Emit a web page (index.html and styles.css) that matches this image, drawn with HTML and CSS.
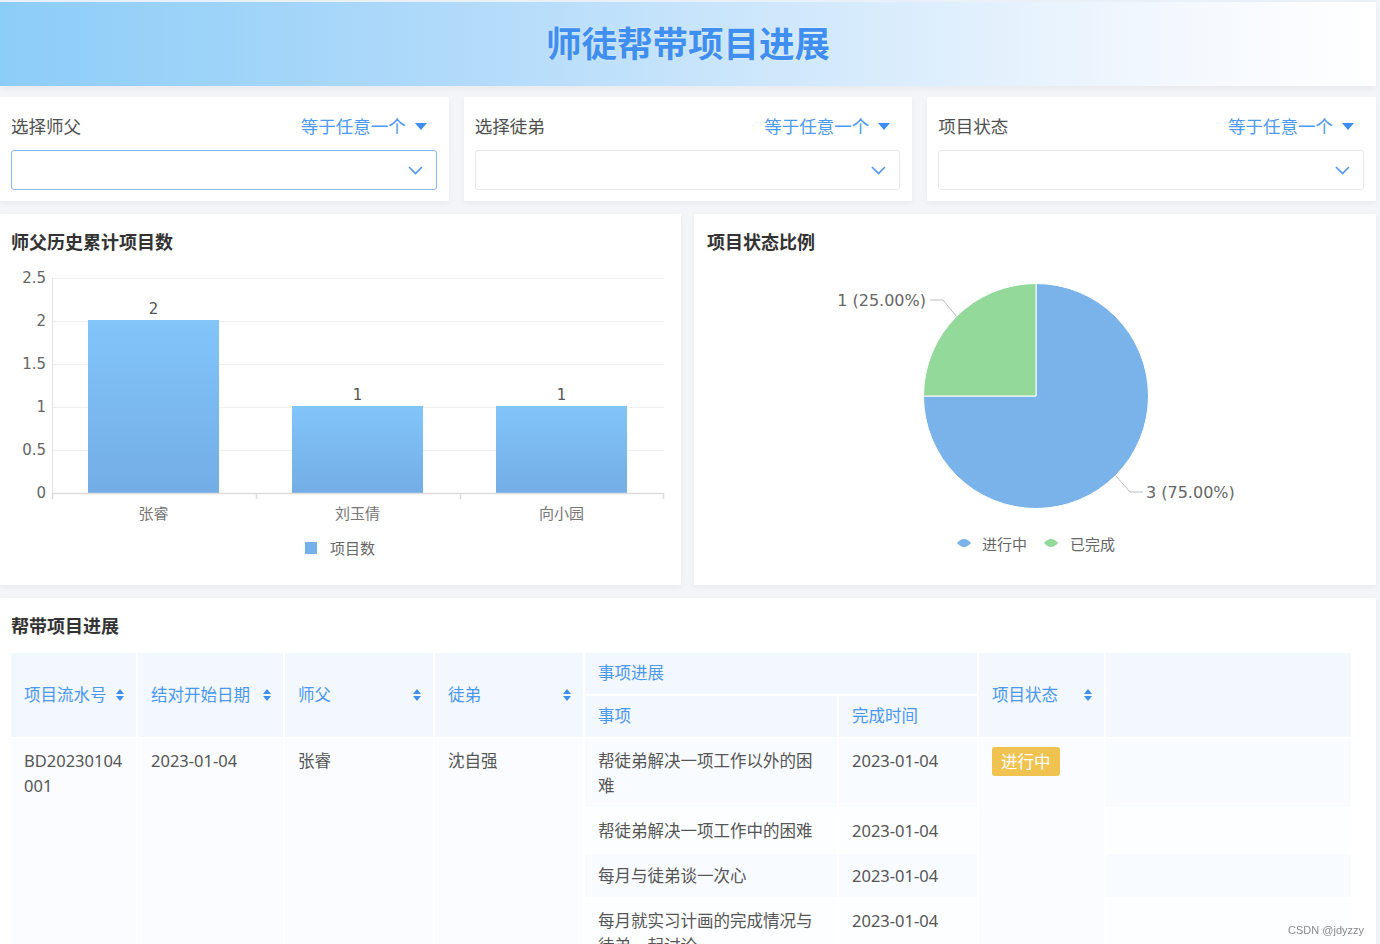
FILE: index.html
```html
<!DOCTYPE html>
<html lang="zh-CN">
<head>
<meta charset="utf-8">
<title>师徒帮带项目进展</title>
<link rel="stylesheet" href="styles.css">
</head>
<body>
<div class="page">
  <header class="banner"><h1>师徒帮带项目进展</h1></header>

  <section class="filters">
    <div class="card filter">
      <div class="filter-head">
        <span class="filter-label">选择师父</span>
        <span class="filter-op">等于任意一个<svg class="caret" width="12" height="7" viewBox="0 0 12 7"><path d="M0 0H12L6 7Z" fill="#3d8ef0"/></svg></span>
      </div>
      <div class="select focus"><svg class="chev" width="15" height="9" viewBox="0 0 15 9"><path d="M1 1L7.5 7.5L14 1" fill="none" stroke="#4e97ef" stroke-width="1.6"/></svg></div>
    </div>
    <div class="card filter">
      <div class="filter-head">
        <span class="filter-label">选择徒弟</span>
        <span class="filter-op">等于任意一个<svg class="caret" width="12" height="7" viewBox="0 0 12 7"><path d="M0 0H12L6 7Z" fill="#3d8ef0"/></svg></span>
      </div>
      <div class="select"><svg class="chev" width="15" height="9" viewBox="0 0 15 9"><path d="M1 1L7.5 7.5L14 1" fill="none" stroke="#4e97ef" stroke-width="1.6"/></svg></div>
    </div>
    <div class="card filter">
      <div class="filter-head">
        <span class="filter-label">项目状态</span>
        <span class="filter-op">等于任意一个<svg class="caret" width="12" height="7" viewBox="0 0 12 7"><path d="M0 0H12L6 7Z" fill="#3d8ef0"/></svg></span>
      </div>
      <div class="select"><svg class="chev" width="15" height="9" viewBox="0 0 15 9"><path d="M1 1L7.5 7.5L14 1" fill="none" stroke="#4e97ef" stroke-width="1.6"/></svg></div>
    </div>
  </section>

  <section class="charts">
    <div class="card chart">
      <h2 class="card-title">师父历史累计项目数</h2>
      <svg class="chart-svg" width="681" height="333" viewBox="0 0 681 333">
        <defs>
          <linearGradient id="barGrad" x1="0" y1="0" x2="0" y2="1">
            <stop offset="0" stop-color="#82c5f9"/>
            <stop offset="1" stop-color="#73ade6"/>
          </linearGradient>
        </defs>
        <g stroke="#f0f0f0" stroke-width="1">
          <line x1="52" y1="26.5" x2="664" y2="26.5"/>
          <line x1="52" y1="69.5" x2="664" y2="69.5"/>
          <line x1="52" y1="112.5" x2="664" y2="112.5"/>
          <line x1="52" y1="155.5" x2="664" y2="155.5"/>
          <line x1="52" y1="198.5" x2="664" y2="198.5"/>
        </g>
        <line x1="52.5" y1="26" x2="52.5" y2="241" stroke="#e3e3e3"/>
        <g class="axis-y">
          <text x="46" y="26">2.5</text>
          <text x="46" y="69">2</text>
          <text x="46" y="112">1.5</text>
          <text x="46" y="155">1</text>
          <text x="46" y="198">0.5</text>
          <text x="46" y="241">0</text>
        </g>
        <rect x="88" y="68" width="131" height="173" fill="url(#barGrad)"/>
        <rect x="292" y="154" width="131" height="87" fill="url(#barGrad)"/>
        <rect x="496" y="154" width="131" height="87" fill="url(#barGrad)"/>
        <g stroke="#dcdcdc" stroke-width="1.5">
          <line x1="52" y1="241.5" x2="664" y2="241.5"/>
          <line x1="52.5" y1="241" x2="52.5" y2="247"/>
          <line x1="256.5" y1="241" x2="256.5" y2="247"/>
          <line x1="460.5" y1="241" x2="460.5" y2="247"/>
          <line x1="663.5" y1="241" x2="663.5" y2="247"/>
        </g>
        <g class="val">
          <text x="153.5" y="57">2</text>
          <text x="357.5" y="143">1</text>
          <text x="561.5" y="143">1</text>
        </g>
        <g class="axis-x">
          <text x="153.5" y="260">张睿</text>
          <text x="357.5" y="260">刘玉倩</text>
          <text x="561.5" y="260">向小园</text>
        </g>
        <rect x="305" y="290" width="12" height="12" fill="#74b0e9"/>
        <text class="legend" x="330" y="295">项目数</text>
      </svg>
    </div>
    <div class="card chart">
      <h2 class="card-title">项目状态比例</h2>
      <svg class="chart-svg" width="682" height="333" viewBox="0 0 682 333">
        <path d="M342 144 L342 31.5 A112.5 112.5 0 1 1 229.5 144 Z" fill="#79b3e9" stroke="#fff" stroke-width="1"/>
        <path d="M342 144 L229.5 144 A112.5 112.5 0 0 1 342 31.5 Z" fill="#93d999" stroke="#fff" stroke-width="1"/>
        <polyline points="262.5,64.5 249,48 236,48" fill="none" stroke="#bdbdbd" stroke-width="1"/>
        <polyline points="421.5,223.5 436,240 449,240" fill="none" stroke="#bdbdbd" stroke-width="1"/>
        <text class="pie-label" x="232" y="48" text-anchor="end">1 (25.00%)</text>
        <text class="pie-label" x="452" y="240">3 (75.00%)</text>
        <path d="M263 291 Q266.5 287 270 287 Q273.5 287 277 291 Q273.5 295 270 295 Q266.5 295 263 291Z" fill="#79b3e9"/>
        <text class="legend" x="288" y="291">进行中</text>
        <path d="M350 291 Q353.5 287 357 287 Q360.5 287 364 291 Q360.5 295 357 295 Q353.5 295 350 291Z" fill="#93d999"/>
        <text class="legend" x="376" y="291">已完成</text>
      </svg>
    </div>
  </section>

  <section class="card table-card">
    <h2 class="card-title">帮带项目进展</h2>
    <table class="grid">
      <colgroup>
        <col style="width:127px"><col style="width:147px"><col style="width:150px"><col style="width:150px">
        <col style="width:254px"><col style="width:140px"><col style="width:127px"><col style="width:247px">
      </colgroup>
      <thead>
        <tr>
          <th rowspan="2"><div class="th-in"><span>项目流水号</span><svg class="sort" width="8" height="14" viewBox="0 0 8 14"><path d="M4 1L8 6H0Z M0 8H8L4 13Z" fill="#3d8ef0"/></svg></div></th>
          <th rowspan="2"><div class="th-in"><span>结对开始日期</span><svg class="sort" width="8" height="14" viewBox="0 0 8 14"><path d="M4 1L8 6H0Z M0 8H8L4 13Z" fill="#3d8ef0"/></svg></div></th>
          <th rowspan="2"><div class="th-in"><span>师父</span><svg class="sort" width="8" height="14" viewBox="0 0 8 14"><path d="M4 1L8 6H0Z M0 8H8L4 13Z" fill="#3d8ef0"/></svg></div></th>
          <th rowspan="2"><div class="th-in"><span>徒弟</span><svg class="sort" width="8" height="14" viewBox="0 0 8 14"><path d="M4 1L8 6H0Z M0 8H8L4 13Z" fill="#3d8ef0"/></svg></div></th>
          <th colspan="2" class="group">事项进展</th>
          <th rowspan="2"><div class="th-in"><span>项目状态</span><svg class="sort" width="8" height="14" viewBox="0 0 8 14"><path d="M4 1L8 6H0Z M0 8H8L4 13Z" fill="#3d8ef0"/></svg></div></th>
          <th rowspan="2"></th>
        </tr>
        <tr>
          <th class="sub">事项</th>
          <th class="sub">完成时间</th>
        </tr>
      </thead>
      <tbody>
        <tr>
          <td rowspan="4" class="span code">BD20230104001</td>
          <td rowspan="4" class="span">2023-01-04</td>
          <td rowspan="4" class="span">张睿</td>
          <td rowspan="4" class="span">沈自强</td>
          <td class="odd">帮徒弟解决一项工作以外的困难</td>
          <td class="odd">2023-01-04</td>
          <td rowspan="4" class="span"><span class="badge">进行中</span></td>
          <td class="odd"></td>
        </tr>
        <tr>
          <td class="even">帮徒弟解决一项工作中的困难</td>
          <td class="even">2023-01-04</td>
          <td class="even"></td>
        </tr>
        <tr>
          <td class="odd">每月与徒弟谈一次心</td>
          <td class="odd">2023-01-04</td>
          <td class="odd"></td>
        </tr>
        <tr>
          <td class="even">每月就实习计画的完成情况与徒弟一起讨论</td>
          <td class="even">2023-01-04</td>
          <td class="even"></td>
        </tr>
      </tbody>
    </table>
  </section>
</div>
<div class="watermark">CSDN @jdyzzy</div>
</body>
</html>
```

FILE: styles.css
```css
html, body {
  margin: 0;
  padding: 0;
  height: 100%;
}
body {
  background: #f4f5f8;
  overflow: hidden;
  font-family: "Noto Sans", "Noto Sans CJK SC", sans-serif;
  color: #555;
}
.page {
  width: 1376px;
  display: flex;
  flex-direction: column;
}
.banner {
  box-sizing: border-box;
  height: 86px;
  padding-bottom: 4px;
  border-top: 2px solid #e9f0f7;
  background: linear-gradient(90deg, #8ccdf8 0%, #b3dbfa 35%, #d6ebfc 62%, #f3f8fe 85%, #ffffff 100%);
  box-shadow: 0 3px 8px rgba(0, 0, 0, 0.05);
  display: flex;
  align-items: center;
  justify-content: center;
}
.banner h1 {
  margin: 0;
  font-family: "Noto Sans CJK SC", sans-serif;
  font-size: 35.5px;
  font-weight: 700;
  color: #3f8ef0;
  text-shadow: 0 0 2px rgba(255, 255, 255, 0.7);
  line-height: 1;
}
.card {
  background: #fff;
  box-shadow: 0 2px 6px rgba(0, 0, 0, 0.05);
}
.filters {
  margin-top: 11px;
  display: grid;
  grid-template-columns: repeat(3, 1fr);
  gap: 15px;
}
.filter {
  height: 104px;
  box-sizing: border-box;
  padding: 18px 12px 11px 11px;
}
.filter-head {
  display: flex;
  justify-content: space-between;
  align-items: center;
  height: 22px;
  line-height: 22px;
  margin-right: 10px;
}
.filter-label {
  font-family: "Noto Sans CJK SC", sans-serif;
  font-size: 17.5px;
  color: #4f4f4f;
}
.filter-op {
  font-family: "Noto Sans CJK SC", sans-serif;
  font-size: 17.5px;
  color: #4c9af2;
  display: flex;
  align-items: center;
  gap: 9px;
}
.caret { display: block; }
.select {
  margin-top: 13px;
  height: 40px;
  box-sizing: border-box;
  border: 1px solid #e8e9ec;
  border-radius: 3px;
  display: flex;
  align-items: center;
  justify-content: flex-end;
  padding-right: 13px;
}
.select.focus {
  border-color: #86b8f4;
}
.chev { display: block; }
.charts {
  margin-top: 13px;
  display: grid;
  grid-template-columns: 1fr 1fr;
  gap: 13px;
}
.chart {
  height: 371px;
  box-sizing: border-box;
}
.card-title {
  margin: 0;
  padding: 16px 12px 0 11px;
  height: 22px;
  line-height: 22px;
  font-family: "Noto Sans CJK SC", sans-serif;
  font-size: 18px;
  font-weight: 700;
  color: #333;
}
.chart + .chart .card-title { padding-left: 13px; }
.chart-svg { display: block; }
.chart-svg text {
  font-family: "DejaVu Sans", "Noto Sans CJK SC", sans-serif;
  dominant-baseline: central;
}
.axis-y text {
  font-size: 15px;
  fill: #666;
  text-anchor: end;
}
.val text {
  font-size: 15px;
  fill: #555;
  text-anchor: middle;
}
.axis-x text {
  font-family: "Noto Sans CJK SC", sans-serif;
  font-size: 15px;
  fill: #777;
  text-anchor: middle;
}
.chart-svg text.legend {
  font-family: "Noto Sans CJK SC", sans-serif;
  font-size: 15px;
  fill: #666;
}
.chart-svg text.pie-label {
  font-size: 16px;
  fill: #666;
}
.table-card {
  margin-top: 13px;
  padding: 16px 25px 0 11px;
  height: 400px;
}
.table-card .card-title { padding: 0; margin-bottom: 15px; }
.grid {
  width: 1344px;
  margin-left: -2px;
  table-layout: fixed;
  border-collapse: collapse;
  font-family: "Noto Sans", "Noto Sans CJK SC", sans-serif;
  font-size: 16.5px;
}
.grid th, .grid td {
  border: 2px solid #fff;
  text-align: left;
  vertical-align: top;
}
.grid th {
  background: #f3f8fe;
  color: #4a97f0;
  font-weight: 400;
  line-height: 22px;
  padding: 9px 12px 10px 13px;
  vertical-align: middle;
}
.th-in {
  display: flex;
  justify-content: space-between;
  align-items: center;
}
.sort { display: block; flex: none; }
.grid td {
  line-height: 25px;
  padding: 9px 13px 9px 13px;
  color: #555;
}
.grid td.span { background: #fafcff; }
.grid td.odd { background: #f8fbff; }
.grid td.even { background: #fdfeff; }
.code { word-break: break-all; }
.badge {
  display: inline-block;
  background: #f0c350;
  color: #fff;
  border-radius: 3px;
  padding: 0 9px;
  line-height: 29px;
  margin-top: -1px;
  font-family: "Noto Sans CJK SC", sans-serif;
}
.watermark {
  position: fixed;
  right: 16px;
  bottom: 8px;
  font-family: "Liberation Sans", sans-serif;
  font-size: 11px;
  color: #8a8a8a;
}
```
